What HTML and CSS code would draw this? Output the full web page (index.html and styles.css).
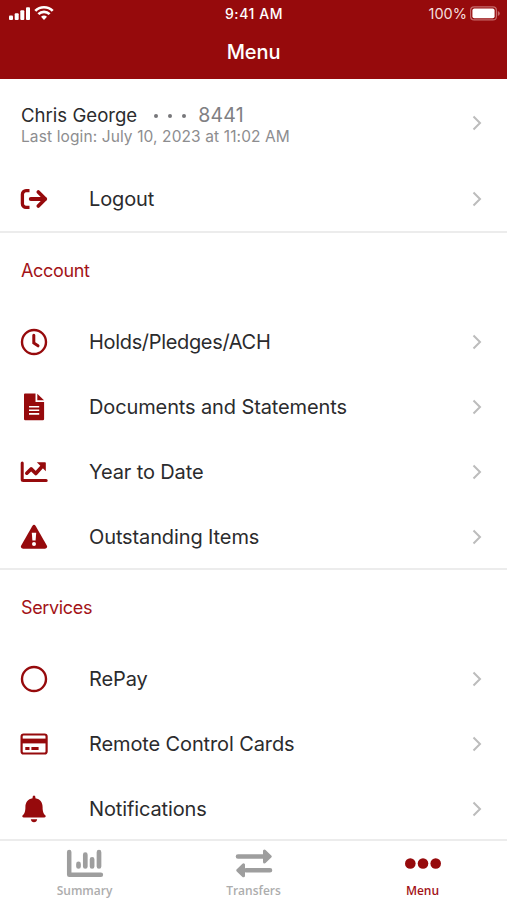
FILE: index.html
```html
<!DOCTYPE html>
<html lang="en">
<head>
<meta charset="utf-8">
<title>Menu</title>
<link rel="stylesheet" href="styles.css">
</head>
<body>
<svg class="defs" aria-hidden="true"><symbol id="chevron" viewBox="0 0 10 16"><path d="M1.500 1.500 8 8l-6.500 6.500" fill="none" stroke="#bcbcbc" stroke-width="2"/></symbol></svg>
<header class="header">
  <div class="status">
    <div class="signal">
      <svg width="46" height="16" viewBox="0 0 46 16" fill="#fff">
        <rect x="1" y="10.500" width="4" height="4.500" rx="1"/><rect x="6.700" y="8.300" width="4" height="6.700" rx="1"/><rect x="12.300" y="5.200" width="4" height="9.800" rx="1"/><rect x="18" y="2.200" width="4" height="12.800" rx="1"/>
        <g fill="none" stroke="#fff" stroke-width="2.700"><path d="M27.300 5.900a12.200 12.200 0 0 1 17.400 0M30.400 9.100a8 8 0 0 1 11.200 0"/></g>
        <path d="M33 11.800a4.400 4.400 0 0 1 6 0L36 15z"/>
      </svg>
    </div>
    <span class="time">9:41 AM</span>
    <div class="battery"><span class="percent">100%</span>
      <svg width="30" height="15" viewBox="0 0 30 15"><rect x=".6" y=".9" width="25.800" height="13" rx="3.500" fill="none" stroke="#c56a6b" stroke-width="1.200"/><rect x="2.400" y="2.600" width="22.200" height="9.600" rx="2" fill="#fff"/><path d="M27.800 5v5q2-.7 2-2.500T27.800 5z" fill="#c56a6b"/></svg>
    </div>
  </div>
  <h1 class="title">Menu</h1>
</header>
<main class="content">
  <section class="group">
    <div class="row profile">
      <div class="who">
        <div class="name-line"><span class="name">Chris George</span><span class="dots"><i></i><i></i><i></i></span><span class="digits">8441</span></div>
        <div class="last">Last login: July 10, 2023 at 11:02 AM</div>
      </div>
      <svg class="chevron"><use href="#chevron"/></svg>
    </div>
    <div class="row">
      <svg class="icon" viewBox="0 0 28 28" fill="none" stroke="#960a0c" stroke-width="3.300" stroke-linecap="round" stroke-linejoin="round"><path d="M9.500 5.700H6a3.600 3.600 0 0 0-3.600 3.600v9.400A3.600 3.600 0 0 0 6 22.300h3.500" stroke-linecap="butt"/><path d="M10.800 14h14" stroke-width="4"/><path d="M18.300 7l7 7-7 7" stroke-width="3.700"/></svg>
      <span class="label">Logout</span><svg class="chevron"><use href="#chevron"/></svg>
    </div>
  </section>
  <section class="group account">
    <h2 class="heading">Account</h2>
    <div class="row">
      <svg class="icon" viewBox="0 0 28 28" fill="none" stroke="#960a0c"><circle cx="14" cy="14" r="12" stroke-width="2.400"/><path d="M13.800 7.300V15l4.200 2.800" stroke-width="3" stroke-linecap="round"/></svg>
      <span class="label compact">Holds/Pledges/ACH</span><svg class="chevron"><use href="#chevron"/></svg>
    </div>
    <div class="row">
      <svg class="icon" viewBox="0 0 28 28" fill="#960a0c"><path d="M5 .6h10.500v8.300h8.600v17q0 1.300-1.300 1.300H5.300Q4 27.200 4 25.900V1.600Q4 .6 5 .6z"/><path d="M17.300.8 24 7.300h-6.700z"/><path d="M9 13.700h10.200M9 17.300h10.200M9 20.900h10.200" stroke="#fff" stroke-width="1.600"/></svg>
      <span class="label">Documents and Statements</span><svg class="chevron"><use href="#chevron"/></svg>
    </div>
    <div class="row">
      <svg class="icon" viewBox="0 0 28 28" fill="none" stroke="#960a0c"><path d="M2.200 5v16.600q0 1 1 1h23" stroke-width="3" stroke-linecap="round"/><path d="m6.800 15.200 4.300-4.300 4.700 4.600 6.700-7.500" stroke-width="3.600" stroke-linecap="round" stroke-linejoin="round"/><path d="M16.800 4.200H25q.8 0 .8.800v8.300z" fill="#960a0c" stroke="none"/></svg>
      <span class="label">Year to Date</span><svg class="chevron"><use href="#chevron"/></svg>
    </div>
    <div class="row">
      <svg class="icon" viewBox="0 0 28 28"><path d="M12.200 3.200q1.800-2.700 3.600 0l11 19.200q1.200 2.900-1.800 3.400H3q-3-.5-1.800-3.400z" fill="#960a0c"/><path d="M11.800 9.700h4.400l-.6 7.800h-3.200z" fill="#fff"/><circle cx="14" cy="20.900" r="2" fill="#fff"/></svg>
      <span class="label">Outstanding Items</span><svg class="chevron"><use href="#chevron"/></svg>
    </div>
  </section>
  <section class="group services">
    <h2 class="heading">Services</h2>
    <div class="row">
      <svg class="icon" viewBox="0 0 28 28" fill="none" stroke="#960a0c" stroke-width="2.400"><circle cx="14" cy="14" r="12"/></svg>
      <span class="label">RePay</span><svg class="chevron"><use href="#chevron"/></svg>
    </div>
    <div class="row">
      <svg class="icon" viewBox="0 0 28 28"><rect x="1.600" y="4.500" width="25" height="19" rx="2" fill="#fff" stroke="#960a0c" stroke-width="2.200"/><path d="M1.600 8.600h25v4.800h-25z" fill="#960a0c"/><path d="M5.300 18.500h4.200M11.400 18.500h7.200" stroke="#960a0c" stroke-width="3"/></svg>
      <span class="label">Remote Control Cards</span><svg class="chevron"><use href="#chevron"/></svg>
    </div>
    <div class="row">
      <svg class="icon" viewBox="0 0 28 28" fill="#960a0c"><path d="M12.600 2.300Q12.600.6 14 .6t1.400 1.700v.9c5 .8 7.200 4.400 7.200 8.700 0 4.700.9 6.600 2.700 8.400.9 1.200.3 2.300-1.100 2.300H3.800c-1.400 0-2-1.100-1.100-2.300 1.800-1.800 2.700-3.700 2.700-8.400 0-4.300 2.200-7.900 7.200-8.700z"/><path d="M10.800 24.300h6.400q-.5 2.900-3.200 2.900t-3.200-2.900z"/></svg>
      <span class="label">Notifications</span><svg class="chevron"><use href="#chevron"/></svg>
    </div>
  </section>
</main>
<nav class="tabs">
  <div class="tab">
    <svg class="tab-icon" viewBox="0 0 38 30" fill="none" stroke="#9e9e9e" stroke-linecap="round"><path d="M3.200 3v22.700h31.700" stroke-width="4.500" stroke-linejoin="round"/><path d="M12.500 14.900v2.500M19.300 5.700v11.700M26.100 10.300v7.100M33 3.200v14.200" stroke-width="4.700"/></svg>
    <span class="tab-label">Summary</span>
  </div>
  <div class="tab">
    <svg class="tab-icon" viewBox="0 0 38 30" fill="#9e9e9e" stroke="#9e9e9e" stroke-linecap="round" stroke-linejoin="round"><path d="M3 7.500h25M35 21.300H11" stroke-width="4.600"/><path d="M29.500 2v11l5.700-5.500zM8.500 15.800v11l-5.700-5.500z" stroke-width="3"/></svg>
    <span class="tab-label">Transfers</span>
  </div>
  <div class="tab active">
    <svg class="tab-icon" viewBox="0 0 38 30" fill="#960a0c"><circle cx="6.300" cy="14.500" r="5.300"/><circle cx="19" cy="14.500" r="5.300"/><circle cx="31.700" cy="14.500" r="5.300"/></svg>
    <span class="tab-label">Menu</span>
  </div>
</nav>
</body>
</html>
```
FILE: styles.css
```css
* { box-sizing: border-box; }
body { margin: 0; height: 900px; overflow: hidden; display: flex; flex-direction: column; background: #fff; color: #2b2b2d; font-family: Inter, "Liberation Sans", sans-serif; }
.defs { display: none; }
svg { display: block; flex: none; }
.header { height: 79px; flex: none; background: #960a0c; color: #fff; }
.status { height: 27px; display: grid; grid-template-columns: 1fr auto 1fr; align-items: center; padding: 0 7px 0 8px; }
.signal { margin-top: -1px; }
.time { font-size: 14px; font-weight: 500; letter-spacing: .55px; }
.battery { display: flex; justify-content: flex-end; align-items: center; gap: 3px; }
.percent { font-size: 14.500px; color: #f5dede; }
.title { margin: 0; height: 50px; line-height: 51px; text-align: center; font-size: 20px; font-weight: 500; letter-spacing: -.1px; }
.content { flex: none; height: 760px; overflow: hidden; }
.group { border-bottom: 2px solid #ececec; }
.row { height: 64.800px; padding: 0 25px 0 20px; display: flex; align-items: center; }
.icon { width: 28px; height: 28px; margin-right: 41px; }
.label { font-size: 20px; white-space: nowrap; line-height: 28px; letter-spacing: -.12px; }
.compact { letter-spacing: -.33px; }
.chevron { width: 10px; height: 16px; margin-left: auto; }
.profile { height: 87.200px; padding-left: 21px; }
.who { padding-top: 6px; }
.name-line { display: flex; align-items: center; height: 22px; font-size: 18.600px; }
.dots { display: flex; gap: 10px; margin: 2px 12px 0 17px; }
.dots i { width: 4px; height: 4px; border-radius: 2px; background: #77777a; }
.digits { color: #808083; font-size: 19.500px; letter-spacing: .2px; }
.last { font-size: 15.500px; line-height: 21px; color: #8d8d8f; white-space: nowrap; letter-spacing: .11px; }
.heading { margin: 0; height: 76.800px; line-height: 76px; padding-left: 21px; font-size: 18px; font-weight: 400; letter-spacing: -.35px; color: #a31318; }
.account .row:last-child { margin-bottom: -1px; }
.services { border-bottom: 0; }
.tabs { height: 61px; border-top: 2px solid #ececec; display: grid; grid-template-columns: repeat(3, 1fr); }
.tab { display: flex; flex-direction: column; align-items: center; padding-top: 8px; color: #adadad; }
.tab-icon { width: 38px; height: 30px; }
.tab-label { font: 600 12px/16px "Open Sans", "Noto Sans", sans-serif; margin-top: 4px; }
.active { color: #a31318; }
```
